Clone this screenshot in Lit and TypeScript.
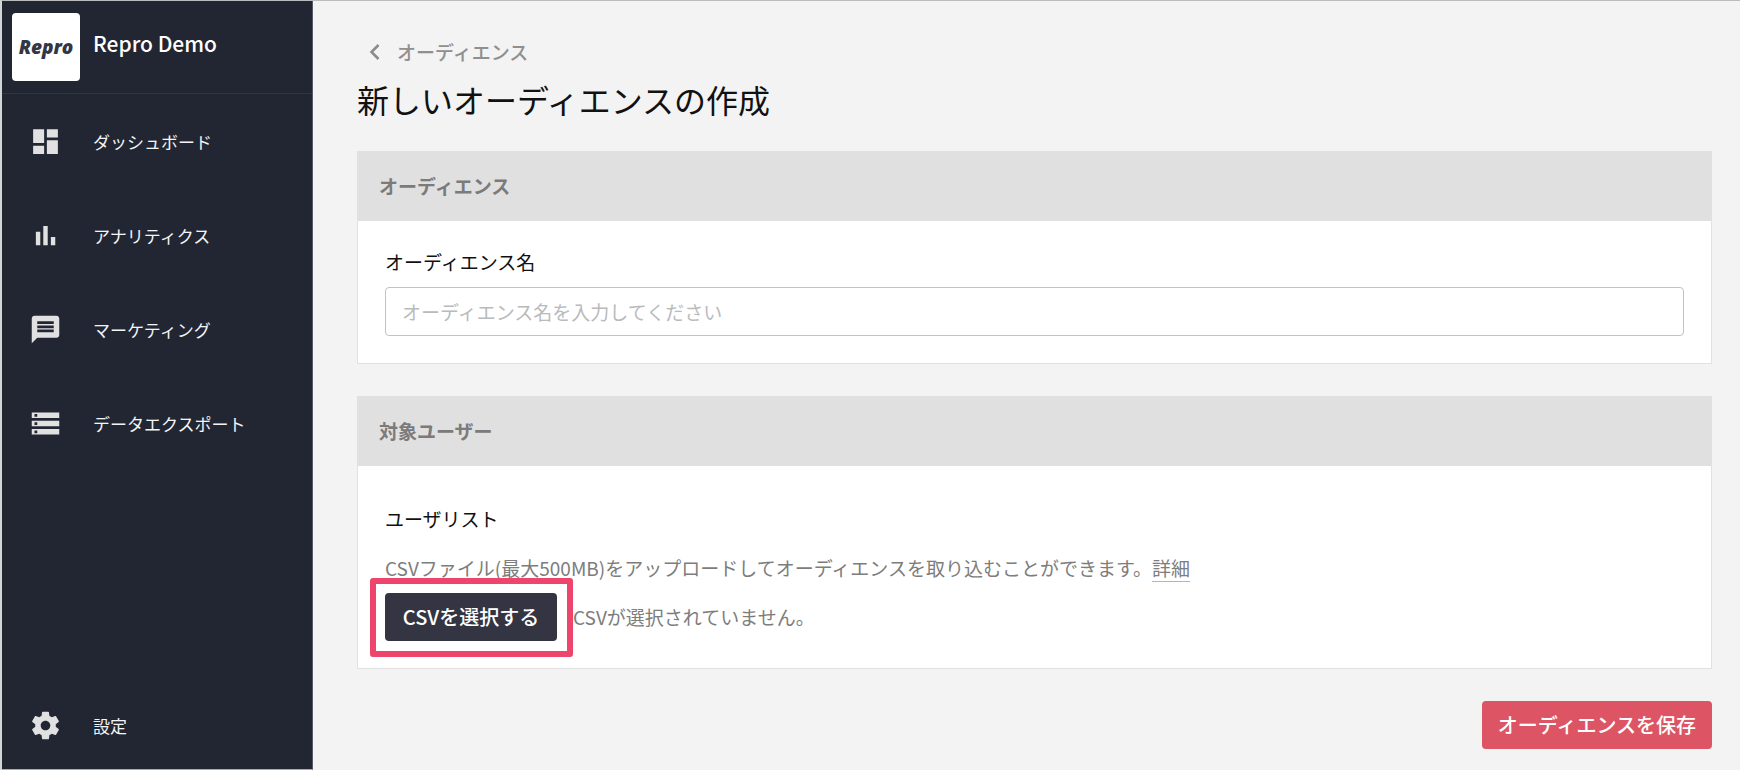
import { LitElement, html, css, svg } from "lit";
import { customElement, property } from "lit/decorators.js";

const icons: Record<string, unknown> = {
  dashboard: svg`<path d="M3 13h8V3H3v10zm0 8h8v-6H3v6zm10 0h8V11h-8v10zm0-18v6h8V3h-8z"/>`,
  analytics: svg`<path d="M5 9.2h3.2V19H5zM10.4 5h3.2v14h-3.2zM15.9 13h3.2v6h-3.2z"/>`,
  marketing: svg`<path d="M20 2H4c-1.1 0-1.99.9-1.99 2L2 22l4-4h14c1.1 0 2-.9 2-2V4c0-1.1-.9-2-2-2zM6 9h12v2H6V9zm12 5H6v-2h12v2zm0-6H6V6h12v2z"/>`,
  storage: svg`<path d="M2 20h20v-4H2v4zm2-3h2v2H4v-2zM2 4v4h20V4H2zm4 3H4V5h2v2zm-4 7h20v-4H2v4zm2-3h2v2H4v-2z"/>`,
  settings: svg`<path d="M19.43 12.98c.04-.32.07-.64.07-.98s-.03-.66-.07-.98l2.11-1.65c.19-.15.24-.42.12-.64l-2-3.46c-.12-.22-.39-.3-.61-.22l-2.49 1c-.52-.4-1.08-.73-1.69-.98l-.38-2.65C14.46 2.18 14.25 2 14 2h-4c-.25 0-.46.18-.49.42l-.38 2.65c-.61.25-1.17.59-1.69.98l-2.49-1c-.23-.09-.49 0-.61.22l-2 3.46c-.13.22-.07.49.12.64l2.11 1.65c-.04.32-.07.65-.07.98s.03.66.07.98l-2.11 1.65c-.19.15-.24.42-.12.64l2 3.46c.12.22.39.3.61.22l2.49-1c.52.4 1.08.73 1.69.98l.38 2.65c.03.24.24.42.49.42h4c.25 0 .46-.18.49-.42l.38-2.65c.61-.25 1.17-.59 1.69-.98l2.49 1c.23.09.49 0 .61-.22l2-3.46c.12-.22.07-.49-.12-.64l-2.11-1.65zM12 15.5c-1.93 0-3.5-1.57-3.5-3.5s1.57-3.5 3.5-3.5 3.5 1.57 3.5 3.5-1.57 3.5-3.5 3.5z"/>`,
};

@customElement("nav-item")
class NavItem extends LitElement {
  @property() icon = "";
  @property() label = "";

  static styles = css`
    :host {
      display: block;
    }
    .link {
      display: flex;
      align-items: center;
      gap: 31px;
      padding-left: 27px;
      color: #f4f4f5;
      font-size: 17px;
      line-height: 24px;
      text-decoration: none;
    }
    .icon {
      width: 33px;
      height: 33px;
      fill: #e1e1e1;
      flex: none;
    }
  `;

  render() {
    return html`<a class="link" href="#">
      <svg class="icon" viewBox="0 0 24 24" aria-hidden="true">${icons[this.icon]}</svg>
      <span>${this.label}</span>
    </a>`;
  }
}

@customElement("panel-card")
class PanelCard extends LitElement {
  @property() heading = "";

  static styles = css`
    :host {
      display: block;
      border: 1px solid #e1e1e1;
      background: #fff;
    }
    .heading {
      margin: 0;
      padding: 20px 21px 21px;
      background: #e0e0e0;
      color: #7b7b7b;
      font-size: 19px;
      font-weight: 700;
      line-height: 28px;
    }
    .body {
      padding: 27px;
    }
  `;

  render() {
    return html`<h2 class="heading">${this.heading}</h2>
      <div class="body"><slot></slot></div>`;
  }
}

@customElement("app-root")
class AppRoot extends LitElement {
  static styles = css`
    :host {
      display: flex;
      box-sizing: border-box;
      min-height: 100vh;
      border-top: 1px solid #b9bcbf;
      border-left: 2px solid #d3d6d6;
      background: #f3f3f3;
      color: #111;
      font-family: "Noto Sans CJK JP", sans-serif;
      font-size: 19px;
      line-height: 28px;
    }
    .sidebar {
      display: flex;
      flex-direction: column;
      flex: none;
      box-sizing: border-box;
      width: 311px;
      background: #212632;
      border-right: 1px solid #565a63;
      border-bottom: 1px solid #a9abb0;
    }
    .brand {
      display: flex;
      gap: 13px;
      padding: 12px 10px;
      border-bottom: 1px solid #303541;
      color: #fff;
    }
    .logo {
      display: flex;
      align-items: center;
      justify-content: center;
      width: 68px;
      height: 68px;
      border-radius: 4px;
      background: #fff;
      color: #333645;
      font: italic 800 19px/24px "Open Sans", sans-serif;
    }
    .app-name {
      padding-top: 15px;
      font-size: 21px;
      font-weight: 500;
      line-height: 30px;
    }
    .nav {
      display: flex;
      flex-direction: column;
      flex: 1;
      gap: 61px;
      padding: 31px 0 27px;
    }
    .last {
      margin-top: auto;
    }
    .main {
      flex: 1;
      min-width: 0;
      padding: 37px 28px 20px 44px;
    }
    .crumb {
      display: inline-flex;
      align-items: center;
      gap: 16px;
      padding-left: 12px;
      color: #8f8f8f;
      font-weight: 500;
      text-decoration: none;
      vertical-align: top;
    }
    .chevron {
      width: 12px;
      height: 18px;
      fill: none;
      stroke: #8c8c8c;
      stroke-width: 2.6;
    }
    .title {
      margin: 9px 0 28px;
      font-size: 32px;
      font-weight: 400;
      line-height: 48px;
    }
    .card {
      margin-bottom: 32px;
    }
    .label {
      display: block;
      margin-bottom: 11px;
    }
    .input {
      display: block;
      box-sizing: border-box;
      width: 100%;
      height: 49px;
      padding: 0 16px;
      border: 1px solid #c3c3c3;
      border-radius: 4px;
      background: #fff;
      color: #111;
      font: inherit;
    }
    .input::placeholder {
      color: #b9babd;
      opacity: 1;
    }
    .subhead {
      margin: 12px 0 21px;
      font-size: 19px;
      font-weight: 400;
    }
    .hint {
      margin: 0 0 11px;
      color: #7d7d7d;
    }
    .more {
      border-bottom: 1px solid #b5b5b5;
      color: inherit;
      text-decoration: none;
    }
    .picker {
      display: flex;
      align-items: center;
      gap: 16px;
      color: #7d7d7d;
    }
    .highlight {
      position: relative;
    }
    .highlight::after {
      content: "";
      position: absolute;
      inset: -15px -16px -16px -15px;
      border: 6px solid #ee456d;
      border-radius: 3px;
      pointer-events: none;
    }
    .button {
      display: block;
      min-width: 172px;
      height: 48px;
      padding: 0 16px;
      border: 0;
      border-radius: 4px;
      color: #fff;
      font: 500 20px/28px "Noto Sans CJK JP", sans-serif;
    }
    .dark {
      background: #333543;
    }
    .primary {
      margin-left: auto;
      background: #dd5564;
    }
  `;

  render() {
    return html`
      <aside class="sidebar">
        <div class="brand">
          <div class="logo">Repro</div>
          <div class="app-name">Repro Demo</div>
        </div>
        <nav class="nav">
          <nav-item icon="dashboard" label="ダッシュボード"></nav-item>
          <nav-item icon="analytics" label="アナリティクス"></nav-item>
          <nav-item icon="marketing" label="マーケティング"></nav-item>
          <nav-item icon="storage" label="データエクスポート"></nav-item>
          <nav-item class="last" icon="settings" label="設定"></nav-item>
        </nav>
      </aside>
      <main class="main">
        <a class="crumb" href="#">
          <svg class="chevron" viewBox="0 0 12 18" aria-hidden="true"><path d="M9.5 2 2.5 9l7 7" /></svg>
          <span>オーディエンス</span>
        </a>
        <h1 class="title">新しいオーディエンスの作成</h1>
        <panel-card class="card" heading="オーディエンス">
          <label class="label" for="audience-name">オーディエンス名</label>
          <input class="input" id="audience-name" type="text" placeholder="オーディエンス名を入力してください" />
        </panel-card>
        <panel-card class="card" heading="対象ユーザー">
          <h3 class="subhead">ユーザリスト</h3>
          <p class="hint">CSVファイル(最大500MB)をアップロードしてオーディエンスを取り込むことができます。<a class="more" href="#">詳細</a></p>
          <div class="picker">
            <div class="highlight"><button class="button dark" type="button">CSVを選択する</button></div>
            <span>CSVが選択されていません。</span>
          </div>
        </panel-card>
        <button class="button primary" type="button">オーディエンスを保存</button>
      </main>
    `;
  }
}
